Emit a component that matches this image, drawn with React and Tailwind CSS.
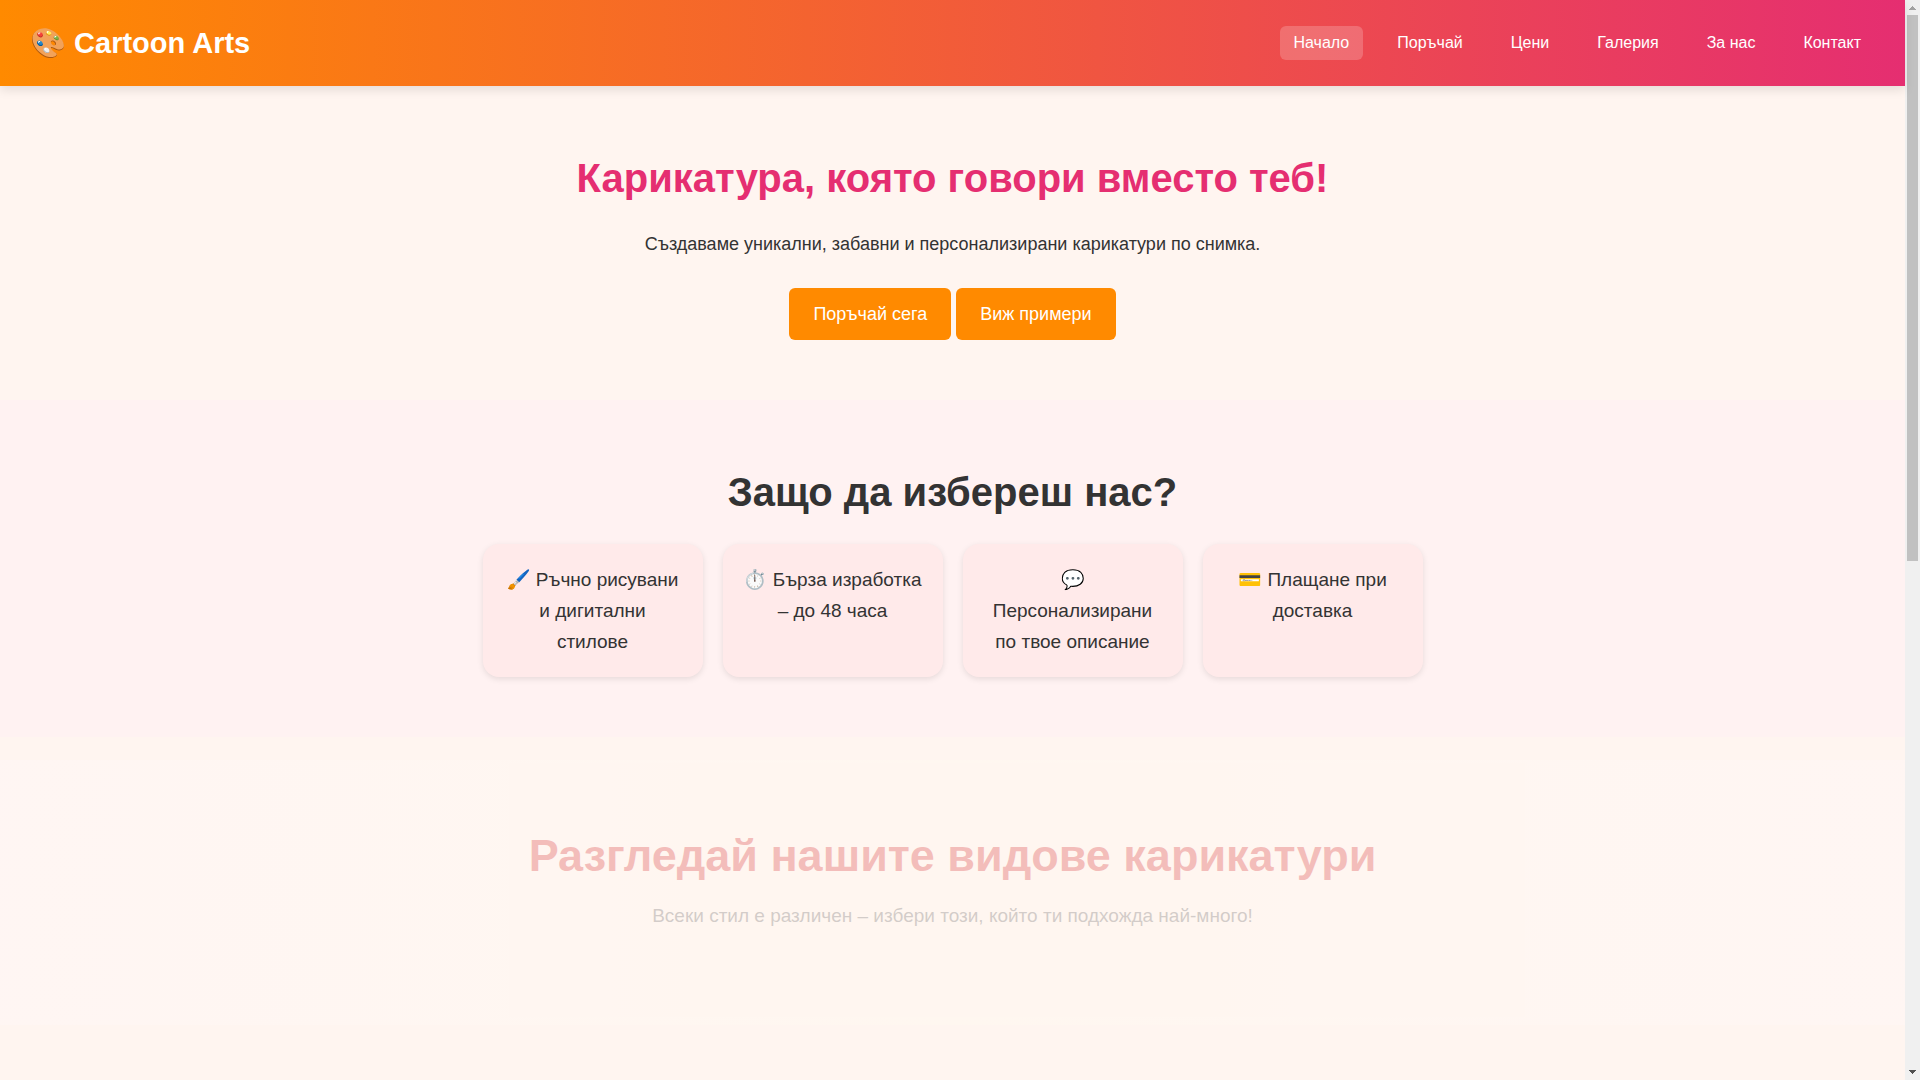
import React, { useState } from "react";

const links = ["Начало", "Поръчай", "Цени", "Галерия", "За нас", "Контакт"];

const features = [
  "🖌️ Ръчно рисувани и дигитални стилове",
  "⏱️ Бърза изработка – до 48 часа",
  "💬 Персонализирани по твое описание",
  "💳 Плащане при доставка",
];

const Navbar = () => {
  const [active, setActive] = useState("Начало");
  return (
    <header className="sticky top-0 z-10 flex items-center justify-between px-[30px] py-5 bg-linear-to-r/srgb from-[#ff8a00] to-[#e52e71] text-white shadow-[0_4px_10px_rgba(0,0,0,0.1)]">
      <div className="text-[29px] leading-[46px] font-bold">🎨 Cartoon Arts</div>
      <nav className="flex gap-5">
        {links.map((link) => (
          <a
            key={link}
            href="#"
            onClick={() => setActive(link)}
            className={`px-3.5 py-2 rounded-md leading-[18px] ${
              active === link ? "bg-white/20" : "hover:bg-white/20"
            }`}
          >
            {link}
          </a>
        ))}
      </nav>
    </header>
  );
};

const Hero = () => (
  <section className="py-[60px] px-5 text-center">
    <h1 className="text-[40px] leading-16 font-bold text-[#e52e71]">
      Карикатура, която говори вместо теб!
    </h1>
    <p className="mt-5 text-lg leading-7">
      Създаваме уникални, забавни и персонализирани карикатури по снимка.
    </p>
    <div className="mt-[30px] flex justify-center gap-[5px] text-lg leading-7 text-white">
      <button type="button" className="px-6 py-3 rounded-md bg-[#ff8a00]">
        Поръчай сега
      </button>
      <button type="button" className="px-6 py-3 rounded-md bg-[#ff8a00]">
        Виж примери
      </button>
    </div>
  </section>
);

const Features = () => (
  <section className="py-[60px] px-5 text-center bg-[#fff2f2]">
    <h2 className="text-[40px] leading-16 font-bold">Защо да избереш нас?</h2>
    <ul className="mt-5 flex flex-wrap justify-center gap-5">
      {features.map((text) => (
        <li
          key={text}
          className="w-[220px] p-5 rounded-2xl bg-[#ffeaea] text-[19px] leading-[31px] shadow-[0_2px_6px_rgba(0,0,0,0.1)]"
        >
          {text}
        </li>
      ))}
    </ul>
  </section>
);

const Styles = () => (
  <section className="mt-[23px] pt-[60px] pb-[94px] px-5 text-center opacity-28 bg-linear-to-r/srgb from-[#fff8fb] via-[#fffcf0] to-[#fff8fb]">
    <h2 className="text-[45px] leading-[72px] font-bold text-[#d63031]">
      Разгледай нашите видове карикатури
    </h2>
    <p className="mt-2 text-[19px] leading-[31px] text-[#666]">
      Всеки стил е различен – избери този, който ти подхожда най-много!
    </p>
  </section>
);

const ScrollBar = () => (
  <div className="sticky top-0 flex flex-col w-[15px] h-screen shrink-0 bg-[#f0f0f0]" aria-hidden="true">
    <svg viewBox="0 0 15 15" className="size-[15px]" shapeRendering="crispEdges">
      <path d="M7 6h1v1h1v1h1v1h1v1H4V9h1V8h1V7h1z" fill="#a3a3a3" />
    </svg>
    <div className="flex-1 px-0.5">
      <div className="h-[52%] w-[11px] bg-[#c1c1c1]" />
    </div>
    <svg viewBox="0 0 15 15" className="size-[15px]" shapeRendering="crispEdges">
      <path d="M4 5h7v1h-1v1H9v1H8v1H7V8H6V7H5V6H4z" fill="#505050" />
    </svg>
  </div>
);

const App = () => (
  <div className="flex items-start min-h-screen bg-[#fff5f0] text-[#333] font-['Liberation_Sans',Arial,sans-serif]">
    <main className="flex-1 min-w-0">
      <Navbar />
      <Hero />
      <Features />
      <Styles />
    </main>
    <ScrollBar />
  </div>
);

export default App;
